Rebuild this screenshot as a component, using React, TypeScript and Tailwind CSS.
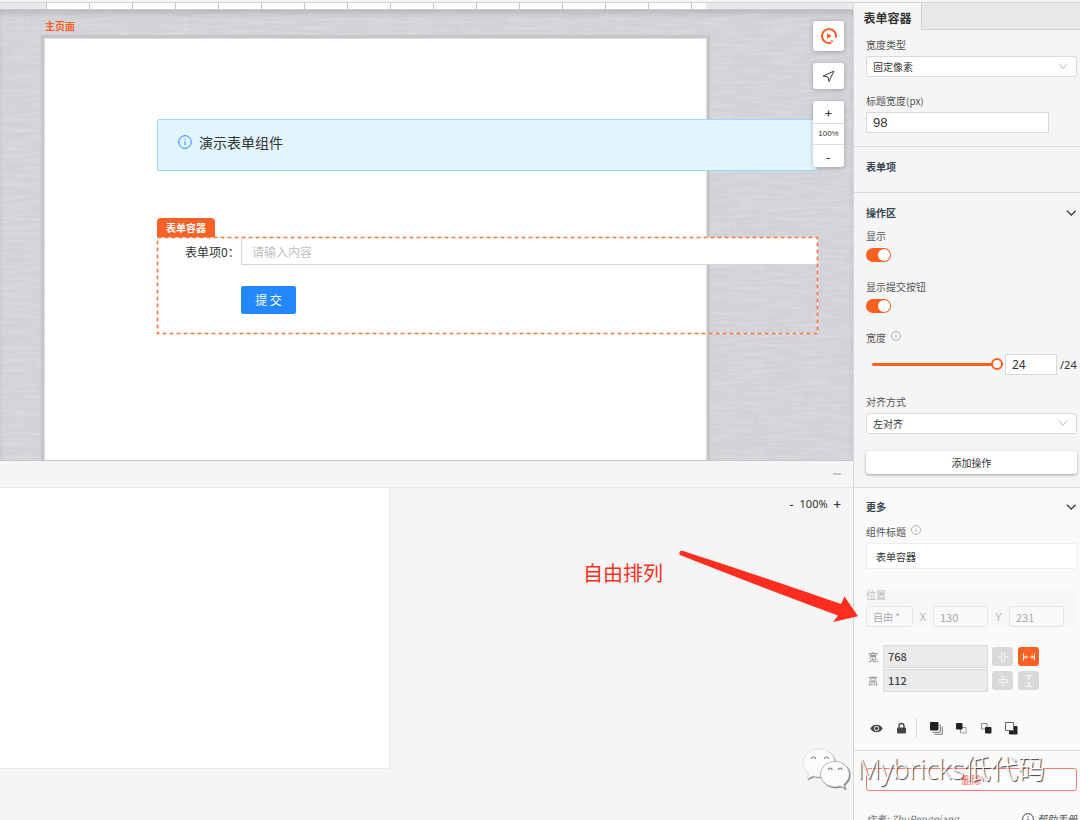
import React, { useId, useState } from "react";
import { Navigation } from "lucide-react";

const TICKS = Array.from({ length: 16 }, (_, i) => i);

function InfoIcon({ className }: { className: string }) {
  return (
    <svg viewBox="0 0 14 14" className={className} fill="none" stroke="currentColor" aria-hidden="true">
      <circle cx="7" cy="7" r="6.3" />
      <path d="M7 6v4.2M7 3.6v1.2" />
    </svg>
  );
}

function Chevron({ className }: { className: string }) {
  return (
    <svg viewBox="0 0 12 12" className={className} fill="none" stroke="currentColor" aria-hidden="true">
      <path d="M2 3.500L6 8.500L10 3.500" />
    </svg>
  );
}

function Ruler() {
  return (
    <div className="flex h-[7px] shrink-0 overflow-hidden border-b border-[#c9c9c9] bg-[#e9e9e9]">
      <div className="w-[46px] shrink-0" />
      <div className="flex w-[660px] shrink-0 overflow-hidden bg-white">
        {TICKS.map((i) => (
          <div key={i} className="w-[43px] shrink-0 border-l border-[#c4c4c4]" />
        ))}
      </div>
    </div>
  );
}

function Linen() {
  return (
    <svg className="absolute inset-0 h-full w-full" aria-hidden="true">
      <filter id="warp" x="0" y="0" width="100%" height="100%">
        <feTurbulence type="fractalNoise" baseFrequency="0.35 0.03" numOctaves="2" seed="3" />
        <feColorMatrix values="0 0 0 0 0.58  0 0 0 0 0.58  0 0 0 0 0.61  0.6 0 0 0 -0.22" />
      </filter>
      <filter id="weft" x="0" y="0" width="100%" height="100%">
        <feTurbulence type="fractalNoise" baseFrequency="0.03 0.35" numOctaves="2" seed="8" />
        <feColorMatrix values="0 0 0 0 1  0 0 0 0 1  0 0 0 0 1  0.4 0 0 0 -0.15" />
      </filter>
      <rect width="100%" height="100%" fill="#d2d3d8" />
      <rect width="100%" height="100%" filter="url(#warp)" />
      <rect width="100%" height="100%" filter="url(#weft)" />
    </svg>
  );
}

function CanvasTools() {
  return (
    <div className="absolute top-[11px] right-[9px] flex w-[31px] flex-col gap-3 text-[#333]">
      <button aria-label="运行" className="flex h-[30px] items-center justify-center rounded-[3px] bg-white text-[#fa6127] shadow-[0_1px_5px_rgba(0,0,0,0.25)]">
        <svg viewBox="0 0 16 16" className="h-4 w-4" fill="none" stroke="currentColor" strokeWidth="2">
          <path d="M10.400 14.600A7 7 0 1 1 14.800 9.800" />
          <path d="M12.300 13.500L9.800 12.600" strokeWidth="1.300" />
          <path d="M6 5.200v5.600L10.800 8z" fill="currentColor" stroke="none" />
        </svg>
      </button>
      <button aria-label="定位" className="flex h-[26px] items-center justify-center rounded-[3px] bg-white shadow-[0_1px_5px_rgba(0,0,0,0.25)]">
        <Navigation className="h-[13px] w-[13px]" strokeWidth={1.8} />
      </button>
      <div className="flex flex-col rounded-[3px] bg-white text-center shadow-[0_1px_5px_rgba(0,0,0,0.25)]">
        <button aria-label="放大" className="h-[22px] text-[12px] leading-6 font-medium">+</button>
        <span className="h-[22px] border-y border-[#ddd] font-['Liberation_Sans'] text-[8px] leading-5">100%</span>
        <button aria-label="缩小" className="h-[22px] text-[12px] leading-6 font-medium">-</button>
      </div>
    </div>
  );
}

function FormBlock() {
  return (
    <div className="mt-[47px] flex flex-col items-start">
      <span className="h-5 w-[58px] rounded-t-[4px] bg-[#fa6127] text-center text-[10px] leading-5 font-bold text-white">表单容器</span>
      <div className="relative -mt-px h-[97px] w-full">
        <div className="flex pt-px pl-7">
          <label htmlFor="item0" className="w-14 text-[12px] leading-7 text-[#333]">表单项0：</label>
          <input id="item0" placeholder="请输入内容" className="h-[27px] min-w-0 flex-1 border-b border-l border-[#d5d5d5] bg-white px-[10px] text-[12px] outline-none placeholder:text-[#bfbfbf]" />
        </div>
        <button className="mt-5 ml-[84px] h-7 w-[55px] rounded-[2px] bg-[#2288fb] text-[12px] text-white">提 交</button>
        <svg className="pointer-events-none absolute inset-0 h-full w-full overflow-visible" fill="none" aria-hidden="true">
          <rect x="0.5" y="0.5" width="660" height="96" stroke="#ffffff" strokeOpacity="0.7" />
          <rect x="0.5" y="0.5" width="660" height="96" stroke="#fa7443" strokeWidth="1.600" strokeDasharray="4 3" />
        </svg>
      </div>
    </div>
  );
}

function Canvas() {
  return (
    <div className="relative h-[450px] shrink-0 overflow-hidden">
      <Linen />
      <div className="absolute inset-0 shadow-[inset_0_5px_6px_-2px_rgba(0,0,0,0.15)]" />
      <div className="relative pt-2 pl-[41px]">
        <div className="pl-1 text-[10px] leading-4 font-bold text-[#fa6127]">主页面</div>
        <div className="mt-px w-[669px] border-[3px] border-[#c5c7c7] bg-[#dcdde0] p-px">
          <div className="h-[440px] bg-white pt-20 pl-28">
            <div className="w-[661px]">
              <div className="flex h-[52px] items-start gap-[7px] rounded-[2px] border border-[#9fd6fb] bg-[#e2f5fd] px-5 pt-[14px]">
                <InfoIcon className="mt-px h-[14px] w-[14px] text-[#2288fb]" />
                <span className="text-[14px] leading-4 text-[#333]">演示表单组件</span>
              </div>
              <FormBlock />
            </div>
          </div>
        </div>
      </div>
      <CanvasTools />
    </div>
  );
}

function BottomPane() {
  return (
    <div className="flex min-h-0 flex-1 flex-col border-t border-[#c6c6c6] bg-[#f5f5f5]">
      <div className="flex h-[27px] shrink-0 items-center justify-end border-b border-[#e6e6e6] pr-3">
        <button aria-label="收起" className="h-[2px] w-2 bg-[#c8c8c8]" />
      </div>
      <div className="flex flex-1 items-start justify-between">
        <div className="h-[281px] w-[390px] border-r border-b border-[#e8e8e8] bg-white" />
        <div className="flex items-center gap-[6px] pt-2 pr-3 text-[11px] leading-4 text-[#333]">
          <button aria-label="缩小画布" className="text-[13px] font-medium">-</button>
          <span className="font-['Noto_Sans']">100%</span>
          <button aria-label="放大画布" className="text-[13px] font-medium">+</button>
        </div>
      </div>
    </div>
  );
}

function Label({ children, htmlFor, className = "" }: { children: React.ReactNode; htmlFor?: string; className?: string }) {
  return (
    <label htmlFor={htmlFor} className={`flex h-4 items-center gap-[5px] text-[10px] leading-4 text-[#555] ${className}`}>
      {children}
    </label>
  );
}

function SelectField({ label, value, options }: { label: string; value: string; options: string[] }) {
  const id = useId();
  return (
    <div>
      <Label htmlFor={id}>{label}</Label>
      <div className="relative mt-[3px]">
        <select id={id} defaultValue={value} className="block h-[21px] w-full appearance-none rounded-[3px] border border-[#d9d9d9] bg-white px-[6px] text-[10px] text-[#333] outline-none">
          {options.map((o) => (
            <option key={o}>{o}</option>
          ))}
        </select>
        <Chevron className="pointer-events-none absolute top-1 right-2 h-3 w-3 text-[#bbb]" />
      </div>
    </div>
  );
}

function SwitchField({ label }: { label: string }) {
  const id = useId();
  const [on, setOn] = useState(true);
  return (
    <div>
      <Label htmlFor={id}>{label}</Label>
      <input
        id={id}
        type="checkbox"
        role="switch"
        checked={on}
        onChange={(e) => setOn(e.target.checked)}
        className="mt-1 flex h-[14px] w-[25px] appearance-none items-center rounded-full bg-[#bbb] p-px before:block before:h-3 before:w-3 before:rounded-full before:bg-white checked:justify-end checked:bg-[#fa6120]"
      />
    </div>
  );
}

function SectionTitle({ title, open }: { title: string; open?: boolean }) {
  return (
    <h2 className="flex h-4 items-center justify-between text-[10px] leading-4 font-bold text-[#37444e]">
      {title}
      {open && (
        <button aria-label={`收起${title}`}>
          <svg viewBox="0 0 12 12" className="h-3 w-3" fill="none" stroke="#333" strokeWidth="1.300" aria-hidden="true">
            <path d="M2 3.800L6.300 8.100L10.600 3.800" />
          </svg>
        </button>
      )}
    </h2>
  );
}

function SizeRow({ label, value, children }: { label: string; value: string; children: React.ReactNode }) {
  const id = useId();
  return (
    <div className="flex items-center">
      <label htmlFor={id} className="w-[17px] pl-[2px] text-[10px] leading-4 text-[#888]">{label}</label>
      <input id={id} defaultValue={value} className="h-[23px] w-[105px] border border-[#dcdcdc] bg-[#ebebeb] px-1 pb-[2px] text-[11px] font-medium text-[#444] outline-none" />
      <div className="ml-1 flex gap-[5px]">{children}</div>
    </div>
  );
}

function SizeButton({ label, active, children }: { label: string; active?: boolean; children: React.ReactNode }) {
  return (
    <button aria-label={label} className={`flex h-[19px] w-[21px] items-center justify-center rounded-[3px] ${active ? "bg-[#fa6120] text-white" : "bg-[#d9d9d9] text-[#f2f2f2]"}`}>
      <svg viewBox="0 0 14 14" className="h-[14px] w-[14px]" fill="none" stroke="currentColor">
        {children}
      </svg>
    </button>
  );
}

function LayerButton({ label, children }: { label: string; children: React.ReactNode }) {
  return (
    <button aria-label={label} className="flex h-[13px] w-[13px] items-center justify-center">
      <svg viewBox="0 0 13 13" className="h-[13px] w-[13px]" fill="none" stroke="#222">
        {children}
      </svg>
    </button>
  );
}

function PropertyPanel() {
  const [span, setSpan] = useState(24);
  return (
    <aside className="flex w-[227px] shrink-0 flex-col border-l border-[#d6d6d6] bg-[#f5f5f5]">
      <div className="flex h-[27px] shrink-0">
        <button className="w-[68px] border-r border-[#d0d0d0] pt-[2px] text-[12px] font-bold text-[#333]">表单容器</button>
        <div className="flex-1 border-b border-[#d0d0d0] bg-[#e7e8e9]" />
      </div>

      <section className="flex shrink-0 flex-col gap-4 border-b border-[#dedede] pt-[7px] pr-[3px] pb-[13px] pl-3">
        <SelectField label="宽度类型" value="固定像素" options={["固定像素", "自适应"]} />
        <div>
          <Label htmlFor="title-width">标题宽度(px)</Label>
          <input id="title-width" defaultValue="98" className="mt-[3px] block h-[21px] w-[183px] border border-[#d9d9d9] bg-white px-[6px] font-['Liberation_Sans'] text-[13px] text-[#333] outline-none" />
        </div>
      </section>

      <section className="shrink-0 border-b border-[#d9d9d9] pt-3 pr-[3px] pb-[17px] pl-3">
        <SectionTitle title="表单项" />
      </section>

      <section className="shrink-0 border-b border-[#dedede] pt-3 pr-[3px] pb-[13px] pl-3">
        <SectionTitle title="操作区" open />
        <div className="mt-[7px] flex flex-col gap-[17px]">
          <SwitchField label="显示" />
          <SwitchField label="显示提交按钮" />
          <div className="pb-[2px]">
            <Label htmlFor="span">
              宽度
              <InfoIcon className="mb-1 h-[10px] w-[10px] text-[#999]" />
            </Label>
            <div className="mt-2 flex items-center pl-[6px] text-[#333]">
              <input
                id="span"
                type="range"
                min={1}
                max={24}
                value={span}
                onChange={(e) => setSpan(Number(e.target.value))}
                className="h-3 w-[131px] appearance-none bg-transparent [&::-webkit-slider-runnable-track]:h-[3px] [&::-webkit-slider-runnable-track]:rounded-full [&::-webkit-slider-runnable-track]:bg-[#fa6120] [&::-webkit-slider-thumb]:-mt-[5px] [&::-webkit-slider-thumb]:h-3 [&::-webkit-slider-thumb]:w-3 [&::-webkit-slider-thumb]:appearance-none [&::-webkit-slider-thumb]:rounded-full [&::-webkit-slider-thumb]:border-2 [&::-webkit-slider-thumb]:border-[#fa6120] [&::-webkit-slider-thumb]:bg-white"
              />
              <input aria-label="宽度栅格" value={span} onChange={(e) => setSpan(Number(e.target.value) || 1)} className="ml-[2px] h-[21px] w-[52px] border border-[#d9d9d9] bg-white px-[6px] font-['Noto_Sans'] text-[12px] outline-none" />
              <span className="ml-[3px] font-['Noto_Sans'] text-[11px] leading-4">/24</span>
            </div>
          </div>
          <SelectField label="对齐方式" value="左对齐" options={["左对齐", "居中", "右对齐"]} />
          <button className="h-[23px] rounded-[3px] bg-white text-[10px] text-[#333] shadow-[0_1px_3px_rgba(0,0,0,0.35)]">添加操作</button>
        </div>
      </section>

      <section className="shrink-0 border-b border-[#d9d9d9] bg-[#fafafa] pt-[11px] pr-[3px] pb-3 pl-3">
        <SectionTitle title="更多" open />
        <Label htmlFor="comp-title" className="mt-[9px]">
          组件标题
          <InfoIcon className="mb-1 h-[10px] w-[10px] text-[#999]" />
        </Label>
        <input id="comp-title" defaultValue="表单容器" className="mt-[3px] block h-[26px] w-full rounded-[2px] border border-[#eee] bg-white px-[9px] text-[10px] text-[#333] outline-none" />

        <fieldset disabled className="mt-[18px] bg-[#f7f7f7] text-[10px] text-[#aaa]">
          <legend className="float-left h-4 w-full leading-4 text-[#bbb]">位置</legend>
          <div className="flex w-full items-center pt-[3px]">
            <select aria-label="定位方式" className="h-[21px] w-[47px] appearance-none rounded-[3px] border border-[#e6e6e6] bg-[#f9f9f9] px-[6px] text-[#aaa] opacity-100">
              <option>自由 *</option>
            </select>
            <label htmlFor="pos-x" className="w-5 text-center text-[11px] text-[#bbb]">X</label>
            <input id="pos-x" defaultValue="130" className="h-[21px] w-[55px] rounded-[3px] border border-[#e6e6e6] bg-[#f9f9f9] px-[6px] text-[11px]" />
            <label htmlFor="pos-y" className="w-[21px] text-center text-[11px] text-[#bbb]">Y</label>
            <input id="pos-y" defaultValue="231" className="h-[21px] w-[55px] rounded-[3px] border border-[#e6e6e6] bg-[#f9f9f9] px-[6px] text-[11px]" />
          </div>
        </fieldset>

        <div className="mt-[18px] flex flex-col gap-px">
          <SizeRow label="宽" value="768">
            <SizeButton label="宽度适应内容">
              <path d="M5.500 2.500h3v9h-3zM2 7h3M9 7h3M3 5.600v2.800M11 5.600v2.800" />
            </SizeButton>
            <SizeButton label="宽度铺满" active>
              <path d="M1.500 3.500v7M12.500 3.500v7M2.500 7h3.500M8 7h3.500M4.300 5.400L2.500 7l1.800 1.600M9.700 5.400L11.500 7l-1.800 1.600" />
            </SizeButton>
          </SizeRow>
          <SizeRow label="高" value="112">
            <SizeButton label="高度适应内容">
              <path d="M2.500 5.500h9v3h-9zM7 2v3M7 9v3M5.600 3h2.800M5.600 11h2.800" />
            </SizeButton>
            <SizeButton label="高度铺满">
              <path d="M3.500 1.500h7M3.500 12.500h7M7 2.500v3.500M7 8v3.500M5.400 4.300L7 2.500l1.600 1.800M5.400 9.700L7 11.500l1.600-1.800" />
            </SizeButton>
          </SizeRow>
        </div>

        <div className="mt-[26px] flex h-5 items-center pl-1">
          <LayerButton label="显示组件">
            <path d="M.3 6.500C2 3.600 4 2.700 6.500 2.700s4.500.9 6.200 3.800c-1.700 2.900-3.700 3.800-6.200 3.800S2 9.400.3 6.500z" fill="#444" stroke="none" />
            <circle cx="6.500" cy="6.500" r="2.200" stroke="#fafafa" strokeWidth="1" />
          </LayerButton>
          <div className="w-3" />
          <LayerButton label="锁定">
            <rect x="2" y="5.500" width="9" height="6" rx="1" fill="#444" stroke="none" />
            <path d="M4 6V4a2.500 2.500 0 0 1 5 0v2" stroke="#444" strokeWidth="1.300" />
          </LayerButton>
          <div className="ml-2 h-5 w-px bg-[#d9d9d9]" />
          <div className="ml-[13px] flex gap-3">
            <LayerButton label="置顶">
              <path d="M0.500 0.500h7.500v7.500h-7.500z" fill="#222" />
              <path d="M10.300 2.500v7.800H2.500M12.300 4.500v7.800H4.500" strokeWidth="0.800" stroke="#555" />
            </LayerButton>
            <LayerButton label="上移一层">
              <path d="M5.500 5.500h5.500v5.500h-5.500z" stroke="#999" />
              <path d="M1.500 1.500h5.500v5.500h-5.500z" fill="#222" />
            </LayerButton>
            <LayerButton label="下移一层">
              <path d="M1.500 1.500h5.500v5.500h-5.500z" stroke="#888" />
              <path d="M5.500 5.500h5.500v5.500h-5.500z" fill="#222" />
            </LayerButton>
            <LayerButton label="置底">
              <path d="M9 4.500h3v7.500H4.500V9" fill="#222" />
              <path d="M0.500 0.500h8v8h-8z" fill="#fafafa" stroke="#666" />
            </LayerButton>
          </div>
        </div>
      </section>

      <section className="flex-1 bg-[#fafafa] pt-[17px] pr-[3px] pl-3">
        <button className="block h-[23px] w-full rounded-[3px] border border-[#ff7875] bg-white text-[10px] text-[#ff5c58]">删除</button>
        <div className="mt-5 flex items-center justify-between text-[10px] leading-4 whitespace-nowrap text-[#777] italic">
          <span>作者: ZhuPengqiang</span>
          <a href="#help" className="flex items-center gap-[3px] text-[#555]">
            <InfoIcon className="h-3 w-3 text-[#333]" />
            帮助手册
          </a>
        </div>
      </section>
    </aside>
  );
}

function Annotation() {
  return (
    <div className="pointer-events-none absolute top-[548px] right-[222px] flex items-start text-[20px] text-[#ff2f20]">
      <span className="mr-[15px] pt-[11px] leading-7">自由排列</span>
      <svg viewBox="0 0 180 76" className="h-[76px] w-[180px]" fill="#ff2d1f" aria-hidden="true">
        <path d="M3.500 2.600Q85 29 163 56L166.500 48.500 180 68.300 155 74 160 67.500Q75 36 2 7Q0 4 3.500 2.600Z" />
      </svg>
    </div>
  );
}

function Watermark() {
  return (
    <div className="pointer-events-none absolute top-[748px] right-[35px] flex items-center gap-[7px]">
      <svg viewBox="0 0 48 42" className="h-[42px] w-12 drop-shadow-[1px_1px_0_rgba(90,90,90,0.7)]" aria-hidden="true">
        <path d="M17 1C8 1 1 7 1 15c0 5 2.400 8.500 6 11l-2 5 6-3c2 .6 4 .9 6 .9 9 0 16-6 16-14S26 1 17 1z" fill="#fbfbfb" stroke="#ccc" strokeWidth="0.500" />
        <path d="M33 13.500c-8 0-14.500 5.500-14.500 12.700S25 39 33 39c2 0 3.600-.3 5.200-.9l5 2.600-1.500-4.200c3.500-2.400 5.600-6 5.600-10.300 0-7.200-6.300-12.700-14.300-12.700z" fill="#fbfbfb" stroke="#888" strokeWidth="0.600" />
        <g fill="none" stroke="#888" strokeWidth="1.200">
          <path d="M9.500 11a2 2 0 0 1 4 0M22.500 11a2 2 0 0 1 4 0M26.500 22a1.800 1.800 0 0 1 3.600 0M36.500 22a1.800 1.800 0 0 1 3.600 0" />
        </g>
      </svg>
      <span className="font-['Open_Sans','Noto_Sans_CJK_SC',sans-serif] text-[27px] leading-10 font-light whitespace-nowrap text-white [text-shadow:1px_1px_1px_#333]">Mybricks低代码</span>
    </div>
  );
}

export default function App() {
  return (
    <div className="relative flex h-screen flex-col overflow-hidden bg-[#f5f5f5] font-['Noto_Sans_CJK_SC',sans-serif]">
      <div className="h-[3px] shrink-0 border-b border-[#d4d4d4]" />
      <div className="flex min-h-0 flex-1">
        <main className="flex min-w-0 flex-1 flex-col">
          <Ruler />
          <Canvas />
          <BottomPane />
        </main>
        <PropertyPanel />
      </div>
      <Annotation />
      <Watermark />
    </div>
  );
}
